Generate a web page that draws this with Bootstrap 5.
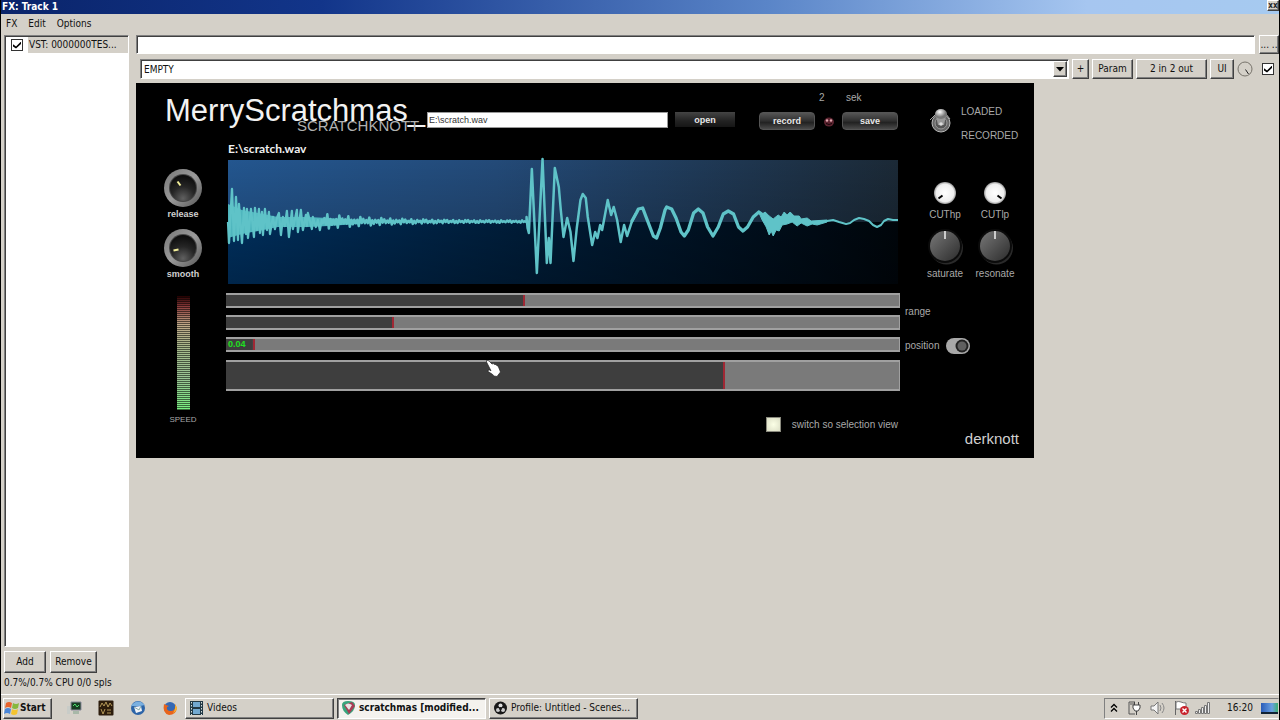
<!DOCTYPE html>
<html lang="en">
<head>
<meta charset="utf-8">
<meta name="viewport" content="width=device-width, initial-scale=1">
<title>FX: Track 1</title>
<link href="https://cdn.jsdelivr.net/npm/bootstrap@5.3.0/dist/css/bootstrap.min.css" rel="stylesheet">
<style>
  :root { --face:#d4d0c8; --hi:#fff; --lo:#808080; --dk:#404040; }
  body { font:10px/14px "DejaVu Sans Condensed","DejaVu Sans",sans-serif; color:#111; background:var(--face); border-left:1px solid #000; border-right:1px solid #000; overflow:hidden; }
  button, input, select { font:inherit; color:inherit; border-radius:0; }
  a { color:inherit; text-decoration:none; }
  .titlebar { height:14px; background:linear-gradient(90deg,#0a246a 0,#12358a 25%,#5a85c8 60%,#a6c6f0 85%,#a6caf0); color:#fff; font-weight:bold; padding-left:1px; }
  .close-btn { width:12px; height:11px; font-size:8px; line-height:8px; }
  .menubar { height:20px; gap:11px; padding:3px 5px 0; }
  .raised { background:var(--face); border:1px solid; border-color:var(--hi) var(--dk) var(--dk) var(--hi); box-shadow:inset -1px -1px 0 var(--lo); padding:0; white-space:nowrap; overflow:hidden; }
  .sunken { background:#fff; border:1px solid; border-color:var(--lo) var(--hi) var(--hi) var(--lo); box-shadow:inset 1px 1px 0 var(--dk); }
  .workspace { padding:1px 0 0 3px; gap:7px; }
  .fx-side { width:125px; }
  .fx-item { padding:1px 0 0 6px; gap:5px; }
  .fx-item span { background:var(--face); flex:1; height:16px; padding:1px 1px; }
  .tick { appearance:none; width:12px; height:12px; margin:0; background:#fff; border:1px solid #333; display:inline-grid; place-content:center; flex:none; }
  .tick:checked::before { content:""; width:8px; height:7px; background:#000; clip-path:polygon(0 40%,38% 70%,100% 0,100% 34%,38% 100%,0 72%); }
  .side-btns { gap:4px; padding:4px 0 3px; }
  .side-btns button { height:22px; }
  .comment-box { height:19px; min-width:0; }
  .preset-row { gap:3px; padding-left:4px; margin-top:5px; }
  .preset-row > * { height:20px; }
  .preset-row > .tick { height:12px; align-self:center; margin:0 5px 0 6px; }
  .preset { appearance:none; min-width:0; padding:0 3px; line-height:17px; }
  .drop { width:14px; top:2px; right:2px; bottom:2px; pointer-events:none; }

  /* plug-in surface */
  .plugin { background:#000; color:#a9a9a9; width:min(100%,898px); height:375px; font:10px/12px "Liberation Sans",Arial,sans-serif; margin-top:4px; }
  .plug-head { height:59px; padding-left:29px; }
  .brand { width:262px; font-size:31px; line-height:36px; color:#f2f2f2; padding-top:10px; }
  .brand small { font-size:15px; line-height:16px; left:132px; top:35px; color:#b0b0b0; }
  .path { width:241px; height:16px; margin-top:29px; font-size:9px; line-height:14px; padding:0 1px; border:1px solid #999; background:#fff; color:#333; }
  .dark-btn { font-weight:bold; font-size:9px; line-height:12px; padding:0; color:#e8e8e8; border:1px solid #555; border-radius:4px; height:18px; background:linear-gradient(#555,#333 45%,#222 60%,#4a4a4a); }
  .open-btn { width:60px; height:15px; margin:29px 24px 0 7px; border:0; border-radius:0; background:linear-gradient(#444,#222 60%,#161616); }
  .rec-grid { display:grid; grid-template-columns:56px 27px 56px; row-gap:8px; padding-top:9px; }
  .rec-grid svg { margin:5px auto 0; }
  .mode { margin:23px 0 0 30px; gap:9px; }
  .mode-names { line-height:12px; }
  .mode-names span + span { margin-top:12px; }
  .control { display:block; position:relative; text-align:center; }
  .control input { position:absolute; inset:0; width:100%; height:100%; opacity:0; margin:0; }
  .control svg { display:block; margin:0 auto; }
  .left-col { width:90px; padding:26px 0 0 4px; font-size:9px; }
  .left-col .control { font-weight:bold; color:#d0d0d0; height:60px; }
  .meter { width:13px; height:114px; margin:8px auto 4px; background:repeating-linear-gradient(transparent 0 1px,rgba(0,0,0,.55) 1px 2px),linear-gradient(#200,#8a3a3a 9%,#c0a888 25%,#a3bc8c 50%,#9ac494 72%,#78f080); }
  .speed { font-size:8px; }
  .file-label { font:bold 12px/14px Lato,sans-serif; color:#f0f0f0; padding-left:2px; }
  .scope { margin:4px 2px 9px; height:124px; }
  .bars { display:grid; gap:7px; }
  .bar { appearance:none; display:block; width:100%; height:15px; margin:0; overflow:hidden; border:solid #a0a0a0; border-width:2px 1px 2px 0; background:linear-gradient(#3e3e3e,#3e3e3e) 0 0/var(--v) 100% no-repeat #7a7a7a; }
  .tall-bar { height:31px; margin-top:1px; }
  .bar::-webkit-slider-thumb { appearance:none; width:2px; height:31px; background:#a02834; border:0; border-radius:0; }
  .bar-value { left:2px; top:2px; font-weight:bold; font-size:9px; line-height:11px; color:#1fe01f; }
  .pointer { left:38.500%; top:66px; }
  .view-row { padding:26px 2px 0 0; gap:11px; }
  .lamp { appearance:none; width:15px; height:15px; margin:0; border:1px solid #8a8a7e; background:radial-gradient(#fbffe6,#dcdfc6); }
  .right-col { width:134px; }
  .knobs { padding:39px 14px 0 20px; display:grid; grid-template-columns:50px 50px; row-gap:6px; }
  .knobs .control svg { margin-bottom:4px; }
  .knobs .big svg { margin-bottom:1px; }
  .range-label { padding:26px 0 0 5px; }
  .pos-row { padding:20px 0 0 5px; gap:6px; }
  .derk { font-size:15px; line-height:18px; color:#d0d0d0; padding:76px 15px 0 0; text-align:right; }

  /* taskbar */
  .taskbar { border-top:1px solid var(--hi); height:26px; padding:3px 0 2px 2px; }
  .taskbar .raised { height:21px; }
  .start { width:49px; font-weight:bold; }
  .quick { gap:16px; padding:0 7px 0 14px; }
  .task { width:149px; margin-right:3px; padding:0 3px; gap:3px; }
  .task.active-task { background:#f4f2ee; border-color:var(--dk) var(--hi) var(--hi) var(--dk); box-shadow:inset 1px 1px 0 var(--lo); font-weight:bold; }
  .tray { border:1px solid; border-color:var(--lo) transparent var(--hi) var(--lo); height:21px; padding-left:5px; }
  .desk { width:17px; height:11px; border:0; padding:0; background:linear-gradient(90deg,#2a5cb8,#6aa0e0 65%,#3cb070); border-bottom:2px solid #123; }
</style>
</head>
<body class="vh-100 d-flex flex-column">
<svg width="0" height="0" class="position-absolute" aria-hidden="true">
  <defs>
    <linearGradient id="rim" x1="0" y1="0" x2="1" y2="1"><stop offset="0" stop-color="#777"/><stop offset=".5" stop-color="#9a9a9a"/><stop offset="1" stop-color="#555"/></linearGradient>
    <radialGradient id="dome" cx=".5" cy=".9" r=".9"><stop offset="0" stop-color="#606060"/><stop offset=".5" stop-color="#262626"/><stop offset="1" stop-color="#0a0a0a"/></radialGradient>
    <linearGradient id="grey" x1="0" y1="0" x2="1" y2="1"><stop offset="0" stop-color="#787878"/><stop offset="1" stop-color="#2c2c2c"/></linearGradient>
    <radialGradient id="white"><stop offset="0" stop-color="#fff"/><stop offset=".8" stop-color="#eee"/><stop offset="1" stop-color="#999"/></radialGradient>
    <radialGradient id="chrome" cx=".4" cy=".3"><stop offset="0" stop-color="#fff"/><stop offset="1" stop-color="#777"/></radialGradient>
  </defs>
</svg>

<header class="titlebar d-flex justify-content-between">
  <span>FX: Track 1</span>
  <button class="raised close-btn text-dark" aria-label="Close">xx</button>
</header>
<nav class="menubar d-flex">
  <a href="#">FX</a><a href="#">Edit</a><a href="#">Options</a>
</nav>

<main class="workspace d-flex flex-grow-1">
  <section class="fx-side d-flex flex-column flex-shrink-0">
    <div class="sunken flex-grow-1">
      <label class="fx-item d-flex align-items-center"><input type="checkbox" class="tick" checked><span>VST: 0000000TES...</span></label>
    </div>
    <div class="side-btns d-flex">
      <button class="raised" style="width:42px">Add</button>
      <button class="raised" style="width:47px">Remove</button>
    </div>
    <div class="text-nowrap pb-1">0.7%/0.7% CPU 0/0 spls</div>
  </section>

  <section class="flex-grow-1" style="min-width:0">
    <div class="d-flex gap-1">
      <input class="sunken comment-box flex-grow-1" aria-label="Comment">
      <button class="raised" style="width:20px">... ..</button>
    </div>
    <div class="preset-row d-flex">
      <div class="position-relative flex-grow-1">
        <select class="sunken preset w-100 h-100" aria-label="Preset"><option>EMPTY</option></select>
        <span class="drop raised position-absolute d-grid"><svg class="m-auto" width="8" height="5"><path d="M0 0h8L4 4.500z"/></svg></span>
      </div>
      <button class="raised" style="width:17px">+</button>
      <button class="raised" style="width:41px">Param</button>
      <button class="raised" style="width:71px">2 in 2 out</button>
      <button class="raised" style="width:24px">UI</button>
      <label class="control"><input type="range" aria-label="Wet"><svg width="16" height="20"><circle cx="8" cy="10" r="7" fill="none" stroke="#77736b"/><path d="M8.500 10.500l3 4.500" stroke="#222"/></svg></label>
      <input type="checkbox" class="tick" checked aria-label="Enabled">
    </div>

    <div class="plugin">
      <div class="plug-head d-flex align-items-start">
        <div class="brand position-relative flex-shrink-0">MerryScratchmas_<small class="position-absolute">SCRATCHKNOTT</small></div>
        <input class="path" value="E:\scratch.wav" aria-label="Path">
        <button class="dark-btn open-btn">open</button>
        <div class="rec-grid">
          <span></span><span class="ps-1">2</span><span class="ps-1">sek</span>
          <button class="dark-btn">record</button>
          <svg width="12" height="10"><ellipse cx="6" cy="5" rx="5" ry="4.500" fill="#5c2430"/><circle cx="4" cy="3.500" r="1.200" fill="#e0a8b0"/><circle cx="8" cy="3.500" r="1.200" fill="#e0a8b0"/><path d="M3 6.500q3 2 6 0" stroke="#170308" fill="none"/></svg>
          <button class="dark-btn">save</button>
        </div>
        <div class="mode d-flex">
          <label class="control"><input type="checkbox" aria-label="Loaded or recorded" checked>
            <svg width="24" height="28"><circle cx="13" cy="17" r="9" fill="#666" stroke="#bbb"/><circle cx="13" cy="17" r="6" fill="#555" stroke="#999"/><path d="M8 8L2 14M18 8l4 5" stroke="#aaa"/><path d="M8 10q5-4 10 0l-2 9h-6z" fill="#999"/><ellipse cx="13" cy="8" rx="6" ry="5" fill="url(#chrome)"/><circle cx="13" cy="18" r="1.800" fill="#ddd"/></svg></label>
          <div class="mode-names d-flex flex-column"><span>LOADED</span><span>RECORDED</span></div>
        </div>
      </div>

      <div class="d-flex">
        <div class="left-col text-center flex-shrink-0">
          <label class="control"><input type="range">
            <svg width="40" height="40"><circle cx="20" cy="20" r="19" fill="url(#rim)"/><circle cx="20" cy="20" r="14" fill="#444"/><circle cx="20" cy="20" r="13" fill="url(#dome)"/><path d="M14.500 13.500l3 4" stroke="#f3ef9a" stroke-width="2"/></svg>release</label>
          <label class="control"><input type="range">
            <svg width="40" height="40"><circle cx="20" cy="20" r="19" fill="url(#rim)"/><circle cx="20" cy="20" r="14" fill="#444"/><circle cx="20" cy="20" r="13" fill="url(#dome)"/><path d="M10.500 22.500l5-1" stroke="#f3ef9a" stroke-width="2"/></svg>smooth</label>
          <div class="meter"></div>
          <div class="speed">SPEED</div>
        </div>

        <div class="flex-grow-1" style="min-width:0">
          <div class="file-label">E:\scratch.wav</div>
          <div class="scope">
            <svg class="d-block overflow-visible" width="100%" height="124" viewBox="0 0 671 124" preserveAspectRatio="none">
              <defs>
                <linearGradient id="up"><stop offset="0" stop-color="#23568f"/><stop offset=".4" stop-color="#234a78"/><stop offset="1" stop-color="#1b2936"/></linearGradient>
                <linearGradient id="down"><stop offset="0" stop-color="#00366b"/><stop offset=".45" stop-color="#00203f"/><stop offset="1" stop-color="#00060c"/></linearGradient>
                <linearGradient id="fade" x1="0" y1="0" x2="0" y2="1"><stop offset="0" stop-opacity="0"/><stop offset="1" stop-opacity=".3"/></linearGradient>
              </defs>
              <rect width="671" height="62" fill="url(#up)"/><rect y="62" width="671" height="62" fill="url(#down)"/><rect width="671" height="124" fill="url(#fade)"/>
              <g fill="none" stroke="#5fc3c8" stroke-linejoin="round">
                <path d="M0 44L14 50 30 53 50 57 80 57 100 58 130 60V64L100 66 80 67 50 67 30 71 14 74 0 78z" fill="#4fb6be" stroke="none"/>
                <path stroke-width="2.300" d="M0 62L1 83 4 29 6 81 8 37 10 80 11 44 14 83 16 48 18 74 19 49 20 78 23 49 26 77 27 48 29 70 31 49 32 73 34 52 35 75 37 49 39 70 41 52 42 74 45 57 47 69 49 58 51 53 53 75 55 57 57 66 59 51 61 77 64 51 65 69 69 50 70 72 73 50 75 70 78 55 79 66 80 53 84 69 85 57 88 67 90 60 92 70 94 59"/>
                <path id="tail" stroke-width="2.500"/>
                <path stroke-width="2.500" d="M299 61V57L300 68 301.300 73 304.300 9 309.300 113 315 -1 319.300 103 321.300 78 323 103 327.300 8 331.300 27 333.300 50 336 77 339.700 58 343 72 346 101 349.300 68 353 40 355.300 34 358.300 38 360.300 57 364.700 85 367.700 72 370 78 372.700 65 374.700 70 380.300 40 383.700 55 386.300 47 389.700 60 393.300 82 396.700 65 399.700 76 404.300 62 408.700 53"/>
                <path stroke-width="3.300" d="M404 62L409 53 411 49 415.300 48 418.700 57 423.700 70 426 76 429.300 78 433 68 437.700 50 439.300 47 444.300 49 448.700 58 453.700 72 457 76 461 70 466.300 53 471 49 475.700 53 480.300 67 485.700 76 491 67 496 54 501 51 506.300 54 511.300 67 515.700 71 520.300 67 526 57 531.700 52 540 58"/>
                <path fill="#5fc3c8" d="M531 51L535 54 538 52 542 56 546 59 551 55 554 57 557 52 560 55 563 52 567 56 572 56 574 59 580 58 584 61 600 60 600 62 590 65 585 64 580 66 574 63 570 66 565 62 560 64 555 65 552 71 549 70 546 76 544 71 542 75 539 67 535 60z"/>
                <path stroke-width="2" d="M584 63L600 61 606 60 612 62 619 64 623 63 627 60 632 58 637 59 642 61 646 65 650 67 654 65 657 61 661 59 666 60 671 60"/>
              </g>
            </svg>
          </div>
          <div class="bars position-relative">
            <input type="range" class="bar" aria-label="Range start" min="0" max="1000" value="443" style="--v:44.3%">
            <input type="range" class="bar" aria-label="Range end" min="0" max="1000" value="248" style="--v:24.8%">
            <div class="position-relative"><input type="range" class="bar" aria-label="Position" min="0" max="1000" value="40" style="--v:4%"><span class="bar-value position-absolute">0.04</span></div>
            <input type="range" class="bar tall-bar" aria-label="Scratch" min="0" max="1000" value="741" style="--v:74.1%">
            <svg class="pointer position-absolute" width="17" height="20" aria-hidden="true"><path d="M1.500 1.500Q3 .8 4.500 2.500L7 5q1.500-1 2.500.5 1.600-.4 2.200 1 1.600 0 1.800 1.500L15.500 13l-3.500 4.500q-3 .3-5-2.500l-4-2.500q-.5-1.800 1.500-1.500l1.500.8L1.500 3z" fill="#fff" stroke="#222" stroke-width=".7"/></svg>
          </div>
          <label class="view-row d-flex justify-content-end align-items-center"><input type="checkbox" class="lamp"><span>switch so selection view</span></label>
        </div>

        <div class="right-col flex-shrink-0">
          <div class="knobs">
            <label class="control"><input type="range"><svg width="24" height="24"><circle cx="12" cy="12" r="11" fill="url(#white)"/><path d="M5.500 17.500l4-3" stroke="#000" stroke-width="2"/></svg>CUThp</label>
            <label class="control"><input type="range"><svg width="24" height="24"><circle cx="12" cy="12" r="11" fill="url(#white)"/><path d="M18.500 17.500l-4-3" stroke="#000" stroke-width="2"/></svg>CUTlp</label>
            <label class="control big"><input type="range"><svg width="38" height="40"><circle cx="20.500" cy="21" r="16.500" fill="#2a2a2a"/><circle cx="19" cy="19" r="17" fill="#0b0b0b"/><circle cx="19" cy="19" r="15" fill="url(#grey)"/><path d="M19 4v8" stroke="#ccc" stroke-width="2"/></svg>saturate</label>
            <label class="control big"><input type="range"><svg width="38" height="40"><circle cx="20.500" cy="21" r="16.500" fill="#2a2a2a"/><circle cx="19" cy="19" r="17" fill="#0b0b0b"/><circle cx="19" cy="19" r="15" fill="url(#grey)"/><path d="M19 4v8" stroke="#ccc" stroke-width="2"/></svg>resonate</label>
          </div>
          <div class="range-label">range</div>
          <div class="pos-row d-flex align-items-center"><span>position</span>
            <label class="control"><input type="checkbox" aria-label="Position on" checked><svg width="26" height="16"><rect x="1" y="0" width="24" height="16" rx="8" fill="#a8a8a8"/><circle cx="17" cy="8" r="6.500" fill="#222"/><circle cx="17" cy="8" r="4.500" fill="#606060"/></svg></label></div>
          <div class="derk">derknott</div>
        </div>
      </div>
    </div>
  </section>
</main>

<footer class="taskbar d-flex align-items-center">
  <button class="raised start d-flex align-items-center"><svg width="16" height="16"><path d="M2 3q3-2 6 0L7 8Q4 6 1 8z" fill="#e8632c"/><path d="M9 3q3 2 6 0l-1 5q-3 2-6 0z" fill="#86b83c"/><path d="M1 9q3-2 6 0l-1 5q-3-2-6 0z" fill="#4a86d8"/><path d="M8 9q3 2 6 0l-1 5q-3 2-6 0z" fill="#f4c430"/></svg>Start</button>
  <div class="quick d-flex align-items-center">
    <svg width="16" height="16"><path d="M5 2h10v8H5z" fill="#183c22" stroke="#889"/><path d="M7 6l2-2 2 3 2-2" stroke="#4ee070" fill="none"/><path d="M1 6h3v8H1z" fill="#c8ccc8"/><path d="M7 11h6v3H7z" fill="#a8b8a8"/></svg>
    <svg width="16" height="16"><rect x=".5" y=".5" width="15" height="15" rx="1" fill="#2c1c0c"/><path d="M2 7l2-4 2 3 2-4 2 5 2-4 2 3M3 9l2 5 2-5M9 10h4M9 13h4" stroke="#b49858" fill="none"/></svg>
    <svg width="16" height="16"><circle cx="8" cy="8" r="7" fill="#2c64a8"/><path d="M1 6q4-6 10-4l4 3-5 1z" fill="#7ab0e0"/><path d="M4 7l7-1 1 5-6 2z" fill="#f2f4f8"/><path d="M4 7l5 3 2-4" stroke="#8aa" fill="none"/></svg>
    <svg width="16" height="16"><circle cx="8" cy="8" r="6" fill="#3468b4"/><path d="M2 4q-2 9 5 11 7 0 8-7l-2-4q1 7-4 7-5 0-4-4l2-1-3-1z" fill="#e8641c"/><path d="M13 4l2 4q-1 4-4 5 3-4 2-9" fill="#f8b830"/></svg>
  </div>
  <button class="raised task d-flex align-items-center"><svg width="15" height="16"><path d="M1 1h13v14H1z" fill="#223844"/><path d="M4 2h7v5H4zM4 9h7v5H4z" fill="#72a8d0"/><path d="M2.500 2v13M12.500 2v13" stroke="#d8e0e0" stroke-dasharray="1.500 1.500"/></svg>Videos</button>
  <button class="raised task active-task d-flex align-items-center"><svg width="15" height="16"><path d="M1 5q0-4 6-4 7 0 7 4 0 6-7 10Q1 11 1 5z" fill="#38a47c"/><path d="M3 5l5 9 6-8-3-4z" fill="#a83c54"/><path d="M4 5q3-3 7 0l-3 5z" fill="#e8e4e4"/></svg>scratchmas [modified...</button>
  <button class="raised task d-flex align-items-center"><svg width="15" height="16"><circle cx="7.500" cy="8" r="6.500" fill="#181818"/><circle cx="7.500" cy="5.500" r="2" fill="#ddd"/><circle cx="5" cy="10" r="2" fill="#ccc"/><circle cx="10" cy="10" r="2" fill="#ccc"/><circle cx="7.500" cy="8.500" r="1.500" fill="#181818"/></svg>Profile: Untitled - Scenes...</button>
  <div class="tray ms-auto d-flex align-items-center">
    <svg width="8" height="10"><path d="M1 4.500l3-3 3 3M1 8.500l3-3 3 3" fill="none" stroke="#000" stroke-width="1.300"/></svg>
    <svg class="ms-2" width="16" height="16"><path d="M9 2H3v12h6M4 4h4" fill="none" stroke="#555"/><path d="M7 5h7v3l-2 3H9L7 8zM8.500 2v3M12.500 2v3M10.500 11v4" fill="#fff" stroke="#444"/></svg>
    <svg class="ms-2" width="16" height="16"><path d="M1 6h3l4-4v12l-4-4H1z" fill="#f4f4f4" stroke="#777"/><path d="M10 5q2 3 0 6M12 3q4 5 0 10" fill="none" stroke="#888"/></svg>
    <svg class="ms-2" width="16" height="16"><path d="M1.500 1v14" stroke="#666"/><path d="M2 2q3-1 5 0t5 1v6H2z" fill="#fff" stroke="#777"/><circle cx="10.500" cy="10.500" r="4.500" fill="#c8222c"/><path d="M8.500 8.500l4 4M12.500 8.500l-4 4" stroke="#fff" stroke-width="1.400"/></svg>
    <svg class="ms-1" width="17" height="16"><path d="M1.500 11.500h2v2h-2zM4.500 9.500h2v4h-2zM7.500 7.500h2v6h-2zM10.500 5.500h2v8h-2zM13.500 2.500h2v11h-2z" fill="#eee" stroke="#777"/></svg>
    <span class="ms-3 me-2">16:20</span>
    <button class="desk" aria-label="Show desktop"></button>
  </div>
</footer>

<script src="https://cdn.jsdelivr.net/npm/bootstrap@5.3.0/dist/js/bootstrap.bundle.min.js"></script>
<script>
  // Quiet tail of the first hit: low noise that decays towards the second hit.
  let d = 'M94 62';
  for (let x = 95, i = 0; x < 300; x += 1.5, i++) {
    const amp = 0.9 + 6 * Math.exp(-(x - 94) / 60);
    const wobble = Math.abs(Math.sin(i * 2.7) * Math.cos(i * 0.9)) + 0.25;
    d += ' L' + x + ' ' + (61.5 + (i % 2 ? -1 : 1) * amp * wobble).toFixed(1);
  }
  document.getElementById('tail').setAttribute('d', d);
</script>
</body>
</html>
